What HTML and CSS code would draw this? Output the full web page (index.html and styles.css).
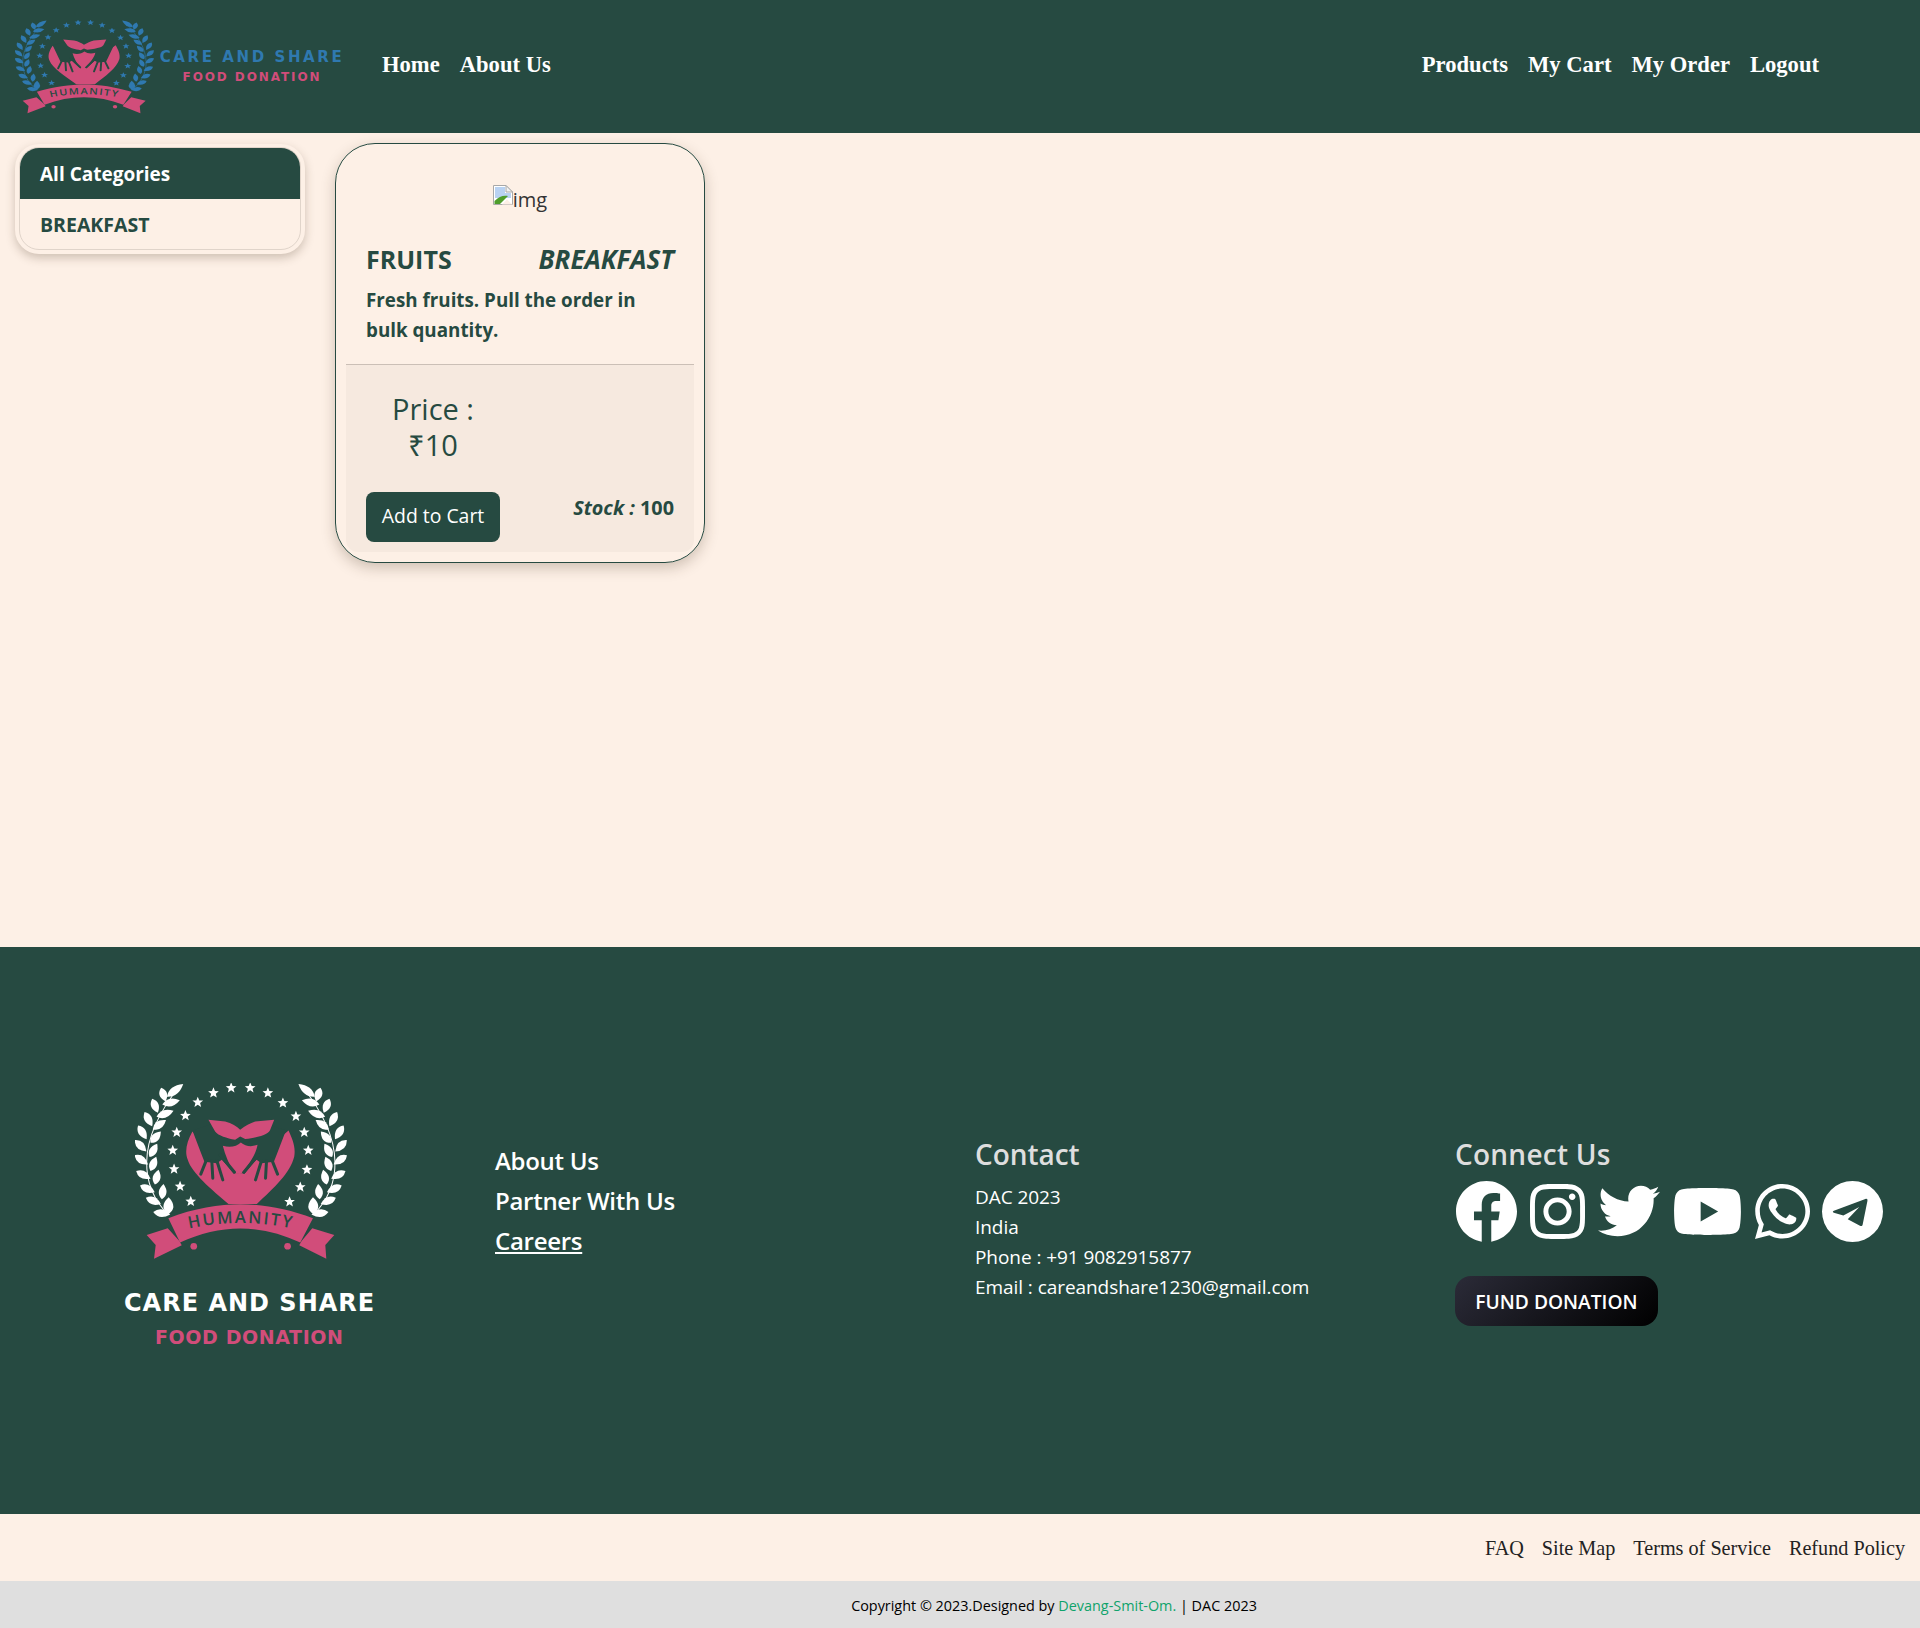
FILE: index.html
```html
<!DOCTYPE html>
<html lang="en">
<head>
<meta charset="utf-8">
<title>Care and Share</title>
<link rel="stylesheet" href="styles.css">
</head>
<body>
<svg class="defs" width="0" height="0" aria-hidden="true">
  <defs>
    <path id="leaf" d="M-27 0Q-4 -23 27 0Q-4 23 -27 0Z"/>
    <polygon id="star" points="0,-17 4.5,-6 16,-5.5 7,2 10,13.5 0,7 -10,13.5 -7,2 -16,-5.5 -4.5,-6"/>
    <g id="hand" class="dark">
      <path d="M52 62L78 130L88 156L125 160L140 150L178 190L190 190L175 110L120 40Z"/>
      <path class="finger" d="M95 148L77 193M110 152L113 205M125 152L143 210M135 135L178 187"/>
    </g>
    <g id="branch">
      <path d="M205 465C125 385 100 250 240 78" fill="none" stroke="currentColor" stroke-width="3"/>
      <use href="#leaf" transform="translate(225 92) rotate(-38) scale(1.15 1)"/>
      <use href="#leaf" transform="translate(190 105) rotate(72) scale(.8 1)"/>
      <use href="#leaf" transform="translate(165 138) rotate(68) scale(.85 1)"/>
      <use href="#leaf" transform="translate(145 178) rotate(62) scale(.9 1)"/>
      <use href="#leaf" transform="translate(127 218) rotate(58) scale(.9 1)"/>
      <use href="#leaf" transform="translate(122 258) rotate(45) scale(.9 1)"/>
      <use href="#leaf" transform="translate(124 300) rotate(35) scale(.9 1)"/>
      <use href="#leaf" transform="translate(130 345) rotate(28) scale(.9 1)"/>
      <use href="#leaf" transform="translate(142 387) rotate(25) scale(.9 1)"/>
      <use href="#leaf" transform="translate(160 423) rotate(22) scale(.9 1)"/>
      <use href="#leaf" transform="translate(213 128) rotate(-14)"/>
      <use href="#leaf" transform="translate(195 162) rotate(-20)"/>
      <use href="#leaf" transform="translate(178 195) rotate(-35) scale(.9 1)"/>
      <use href="#leaf" transform="translate(167 232) rotate(-48) scale(.85 1)"/>
      <use href="#leaf" transform="translate(160 272) rotate(-60) scale(.85 1)"/>
      <use href="#leaf" transform="translate(160 312) rotate(-68) scale(.85 1)"/>
      <use href="#leaf" transform="translate(170 352) rotate(-76) scale(.85 1)"/>
      <use href="#leaf" transform="translate(188 395) rotate(-84) scale(.85 1)"/>
      <use href="#leaf" transform="translate(205 438) rotate(-88) scale(.95 1.3)"/>
      <use href="#leaf" transform="translate(185 460) rotate(8) scale(.95 1)"/>
    </g>
    <g id="emblem">
      <use href="#branch"/>
      <use href="#branch" transform="translate(844 0) scale(-1 1)"/>
      <use href="#star" transform="translate(272 425)"/>
      <use href="#star" transform="translate(240 380)"/>
      <use href="#star" transform="translate(222 328)"/>
      <use href="#star" transform="translate(218 272)"/>
      <use href="#star" transform="translate(230 218)"/>
      <use href="#star" transform="translate(256 168)"/>
      <use href="#star" transform="translate(293 128)"/>
      <use href="#star" transform="translate(340 100)"/>
      <use href="#star" transform="translate(393 85)"/>
      <use href="#star" transform="translate(450 85)"/>
      <use href="#star" transform="translate(503 100)"/>
      <use href="#star" transform="translate(548 130)"/>
      <use href="#star" transform="translate(587 170)"/>
      <use href="#star" transform="translate(612 218)"/>
      <use href="#star" transform="translate(624 272)"/>
      <use href="#star" transform="translate(620 330)"/>
      <use href="#star" transform="translate(600 382)"/>
      <use href="#star" transform="translate(568 426)"/>
      <g transform="translate(225 150)">
        <path class="pink" d="M52 65C35 95 28 125 38 150C50 190 110 240 160 282H245C295 235 345 190 357 140C362 110 350 85 340 62L190 190Z"/>
        <use href="#hand"/>
        <use href="#hand" transform="translate(384 0) scale(-1 1)"/>
        <path class="pink" d="M143 108C165 115 185 110 197 98C210 110 230 112 247 105C243 130 225 160 198 192H178C162 165 150 135 143 108Z"/>
        <path class="finger dark" d="M135 135L178 187M249 135L206 187"/>
        <path class="pink" d="M100 30L150 35C170 40 185 50 195 60C210 48 225 40 240 35L297 30L285 60C280 72 265 80 210 88L195 80L180 90C155 85 130 78 120 65Z"/>
      </g>
      <g class="pink">
        <path d="M205 475C280 445 360 433 420 433C490 433 565 447 638 475L600 548C540 520 480 506 420 506C360 506 300 520 240 548Z"/>
        <path d="M203 505L140 525L167 555L162 596L245 556L238 543Z"/>
        <path d="M636 505L702 525L675 555L678 596L597 556L604 543Z"/>
        <circle cx="281" cy="559" r="10"/>
        <circle cx="562" cy="559" r="10"/>
      </g>
      <path id="humanity-arc" d="M250 510Q420 468 595 510" fill="none"/>
      <text class="humanity"><textPath href="#humanity-arc" startOffset="50%">HUMANITY</textPath></text>
    </g>
  </defs>
</svg>

<header class="topbar">
  <div class="brand">
    <svg class="brand-emblem" viewBox="105 70 635 530" preserveAspectRatio="none" aria-hidden="true"><use href="#emblem"/></svg>
    <div class="brand-text">
      <div class="brand-name">CARE AND SHARE</div>
      <div class="brand-sub">FOOD DONATION</div>
    </div>
  </div>
  <nav class="nav nav-left">
    <a href="#">Home</a>
    <a href="#">About Us</a>
  </nav>
  <nav class="nav nav-right">
    <a href="#">Products</a>
    <a href="#">My Cart</a>
    <a href="#">My Order</a>
    <a href="#">Logout</a>
  </nav>
</header>

<main class="content">
  <aside class="sidebar">
    <div class="cat-list">
      <div class="cat-head">All Categories</div>
      <div class="cat-item">BREAKFAST</div>
    </div>
  </aside>
  <article class="card">
    <div class="card-img">
      <svg class="broken" viewBox="0 0 20 20" aria-hidden="true">
        <path d="M.5 .5H13L19.5 7V19.5H.5Z" fill="#fff" stroke="#a8a8a8"/>
        <path d="M13 .5V7H19.5Z" fill="#f2f2f2" stroke="#a8a8a8"/>
        <path d="M2 2H12V8H18V13H2Z" fill="#b9d2f2"/>
        <path d="M1.5 19V16C6 11 11 10 15 11L7 19Z" fill="#4f9e2c"/>
        <path d="M9 19.5L14 14.5L19.5 19.5Z" fill="#fdf0e6"/>
      </svg><span class="img-alt">img</span>
    </div>
    <div class="card-body">
      <div class="card-title">
        <span>FRUITS</span>
        <em>BREAKFAST</em>
      </div>
      <p class="card-desc">Fresh fruits. Pull the order in bulk quantity.</p>
    </div>
    <div class="card-foot">
      <div class="buy">
        <div class="price">Price :<br>₹10</div>
        <button class="cart-btn" type="button">Add to Cart</button>
      </div>
      <div class="stock"><em>Stock :</em> 100</div>
    </div>
  </article>
</main>

<footer class="site-foot">
  <div class="foot-col foot-logo">
    <svg class="foot-emblem" viewBox="105 70 635 530" aria-hidden="true"><use href="#emblem"/></svg>
    <div class="foot-name">CARE AND SHARE</div>
    <div class="foot-sub">FOOD DONATION</div>
  </div>
  <div class="foot-col foot-links">
    <a href="#">About Us</a>
    <a href="#">Partner With Us</a>
    <a href="#" class="under">Careers</a>
  </div>
  <div class="foot-col foot-contact">
    <h4>Contact</h4>
    <div>DAC 2023</div>
    <div>India</div>
    <div>Phone : +91 9082915877</div>
    <div>Email : careandshare1230@gmail.com</div>
  </div>
  <div class="foot-col foot-connect">
    <h4>Connect Us</h4>
    <div class="socials">
      <svg class="s-fb" viewBox="8 8 496 496" aria-hidden="true"><path d="M504 256C504 119 393 8 256 8S8 119 8 256c0 123.78 90.69 226.38 209.25 245V327.69h-63V256h63v-54.64c0-62.15 37-96.48 93.67-96.48 27.14 0 55.52 4.84 55.52 4.84v61h-31.28c-30.8 0-40.41 19.12-40.41 38.73V256h68.78l-11 71.69h-57.78V501C413.31 482.38 504 379.78 504 256z"/></svg>
      <svg class="s-ig" viewBox="0 32 448 448" aria-hidden="true"><path d="M224.1 141c-63.6 0-114.9 51.3-114.9 114.9s51.3 114.9 114.9 114.9S339 319.5 339 255.9 287.7 141 224.1 141zm0 189.6c-41.1 0-74.7-33.5-74.7-74.7s33.5-74.7 74.7-74.7 74.7 33.5 74.7 74.7-33.6 74.7-74.7 74.7zm146.4-194.3c0 14.9-12 26.8-26.8 26.8-14.9 0-26.8-12-26.8-26.8s12-26.8 26.8-26.8 26.8 12 26.8 26.8zm76.1 27.2c-1.7-35.9-9.9-67.7-36.2-93.9-26.2-26.2-58-34.4-93.9-36.2-37-2.1-147.9-2.1-184.9 0-35.8 1.7-67.6 9.9-93.9 36.1s-34.4 58-36.2 93.9c-2.1 37-2.1 147.9 0 184.9 1.7 35.9 9.9 67.7 36.2 93.9s58 34.4 93.9 36.2c37 2.1 147.9 2.1 184.9 0 35.9-1.7 67.7-9.9 93.9-36.2 26.2-26.2 34.4-58 36.2-93.9 2.1-37 2.1-147.8 0-184.8zM398.8 388c-7.8 19.6-22.9 34.7-42.6 42.6-29.5 11.7-99.5 9-132.1 9s-102.7 2.6-132.1-9c-19.6-7.8-34.7-22.9-42.6-42.6-11.7-29.5-9-99.5-9-132.1s-2.6-102.7 9-132.1c7.8-19.6 22.9-34.7 42.6-42.6 29.5-11.7 99.5-9 132.1-9s102.7-2.6 132.1 9c19.6 7.8 34.7 22.9 42.6 42.6 11.7 29.5 9 99.5 9 132.1s2.7 102.7-9 132.1z"/></svg>
      <svg class="s-tw" viewBox="0 0 512 512" aria-hidden="true"><path d="M459.37 151.716c.325 4.548.325 9.097.325 13.645 0 138.72-105.583 298.558-298.558 298.558-59.452 0-114.68-17.219-161.137-47.106 8.447.974 16.568 1.299 25.34 1.299 49.055 0 94.213-16.568 130.274-44.832-46.132-.975-84.792-31.188-98.112-72.772 6.498.974 12.995 1.624 19.818 1.624 9.421 0 18.843-1.3 27.614-3.573-48.081-9.747-84.143-51.98-84.143-102.985v-1.299c13.969 7.797 30.214 12.67 47.431 13.319-28.264-18.843-46.781-51.005-46.781-87.391 0-19.492 5.197-37.36 14.294-52.954 51.655 63.675 129.3 105.258 216.365 109.807-1.624-7.797-2.599-15.918-2.599-24.04 0-57.828 46.782-104.934 104.934-104.934 30.213 0 57.502 12.67 76.67 33.137 23.715-4.548 46.456-13.32 66.599-25.34-7.798 24.366-24.366 44.833-46.132 57.827 21.117-2.273 41.584-8.122 60.426-16.243-14.292 20.791-32.161 39.308-52.628 54.253z"/></svg>
      <svg class="s-yt" viewBox="15 64 546 384" aria-hidden="true"><path d="M549.655 124.083c-6.281-23.65-24.787-42.276-48.284-48.597C458.781 64 288 64 288 64S117.22 64 74.629 75.486c-23.497 6.322-42.003 24.947-48.284 48.597-11.412 42.867-11.412 132.305-11.412 132.305s0 89.438 11.412 132.305c6.281 23.65 24.787 41.5 48.284 47.821C117.22 448 288 448 288 448s170.78 0 213.371-11.486c23.497-6.321 42.003-24.171 48.284-47.821 11.412-42.867 11.412-132.305 11.412-132.305s0-89.438-11.412-132.305zm-317.51 213.508V175.185l142.739 81.205-142.739 81.201z"/></svg>
      <svg class="s-wa" viewBox="0 32 448 448" aria-hidden="true"><path d="M380.9 97.1C339 55.1 283.2 32 223.9 32c-122.4 0-222 99.6-222 222 0 39.1 10.2 77.3 29.6 111L0 480l117.7-30.9c32.4 17.7 68.9 27 106.1 27h.1c122.3 0 224.1-99.6 224.1-222 0-59.3-25.2-115-67.1-157zm-157 341.6c-33.2 0-65.7-8.9-94-25.7l-6.7-4-69.8 18.3L72 359.2l-4.4-7c-18.5-29.4-28.2-63.3-28.2-98.2 0-101.7 82.8-184.5 184.6-184.5 49.3 0 95.6 19.2 130.4 54.1 34.8 34.9 56.2 81.2 56.1 130.5 0 101.8-84.9 184.6-186.6 184.6zm101.2-138.2c-5.5-2.8-32.8-16.2-37.9-18-5.1-1.9-8.8-2.8-12.5 2.8-3.7 5.6-14.3 18-17.6 21.8-3.2 3.7-6.5 4.2-12 1.4-32.6-16.3-54-29.1-75.5-66-5.7-9.8 5.7-9.1 16.3-30.3 1.8-3.7.9-6.9-.5-9.7-1.4-2.8-12.5-30.1-17.1-41.2-4.5-10.8-9.1-9.3-12.5-9.5-3.2-.2-6.9-.2-10.6-.2-3.7 0-9.7 1.4-14.8 6.9-5.1 5.6-19.4 19-19.4 46.3 0 27.3 19.9 53.7 22.6 57.4 2.8 3.7 39.1 59.7 94.8 83.8 35.2 15.2 49 16.5 66.6 13.9 10.7-1.6 32.8-13.4 37.4-26.4 4.6-13 4.6-24.1 3.2-26.4-1.3-2.5-5-3.9-10.5-6.6z"/></svg>
      <svg class="s-tg" viewBox="0 0 180 180" aria-hidden="true"><path fill-rule="evenodd" d="M90 0A90 90 0 1 0 90 180A90 90 0 1 0 90 0ZM35 88L128 53C133 51 135 54 134 59L120 128C119 133 116 134 112 132L76 113L110 77L63 102L35 94C31 92 31 90 35 88Z"/></svg>
    </div>
    <button class="fund-btn" type="button">FUND DONATION</button>
  </div>
</footer>

<div class="legal">
  <a href="#">FAQ</a>
  <a href="#">Site Map</a>
  <a href="#">Terms of Service</a>
  <a href="#">Refund Policy</a>
</div>
<div class="copyright">Copyright © 2023.Designed by <a href="#">Devang-Smit-Om.</a> | DAC 2023</div>
</body>
</html>
```

FILE: styles.css
```css
* { box-sizing: border-box; }
html, body { margin: 0; padding: 0; }
body {
  width: 1920px;
  background: #fdf0e6;
  color: #264a41;
  font-family: "Open Sans", "Noto Sans", sans-serif;
}
a { color: inherit; text-decoration: none; }
.defs { position: absolute; }
.pink { fill: #d14d7a; }
.dark { fill: #264a41; }
.finger { fill: none; stroke: #264a41; stroke-width: 9; stroke-linecap: round; }
.humanity {
  fill: #264a41;
  font-family: "Open Sans", sans-serif;
  font-weight: 600;
  font-size: 50px;
  letter-spacing: 6px;
  text-anchor: middle;
}

.topbar {
  height: 133px;
  background: #264a41;
  display: flex;
  align-items: center;
  padding-left: 15px;
  padding-right: 101px;
}
.brand { display: flex; align-items: center; width: 367px; height: 133px; }
.brand-emblem {
  width: 139px;
  height: 94px;
  color: #2f79b0;
  fill: currentColor;
  flex: none;
}
.brand-text { width: 186px; margin-left: 5px; text-align: center; }
.brand-name {
  font-family: "DejaVu Sans", sans-serif;
  font-weight: 700;
  font-size: 15px;
  line-height: 20px;
  letter-spacing: 2.6px;
  color: #2f79b0;
  white-space: nowrap;
}
.brand-sub {
  font-family: "DejaVu Sans", sans-serif;
  font-weight: 700;
  font-size: 12px;
  line-height: 20px;
  letter-spacing: 1.9px;
  color: #d14d7a;
  white-space: nowrap;
}
.nav {
  display: flex;
  gap: 20px;
  padding-bottom: 3px;
  font-family: "Liberation Serif", serif;
  font-weight: 700;
  font-size: 22.6px;
  color: #fff;
}
.nav-right { margin-left: auto; }

.content {
  height: 814px;
  display: flex;
  align-items: flex-start;
  padding: 10px 0 0 15px;
  gap: 30px;
}
.sidebar {
  width: 290px;
  margin-top: 1px;
  padding: 3px 4px 4px;
  border-radius: 24px;
  background: #fdf0e6;
  box-shadow: 0 4px 10px rgba(70, 50, 30, .25);
}
.cat-list {
  border: 1px solid #e0d4ca;
  border-radius: 20px;
  overflow: hidden;
}
.cat-head {
  margin: -1px -1px 0;
  height: 52px;
  background: #264a41;
  color: #fff;
  padding: 1px 0 0 21px;
  display: flex;
  align-items: center;
  font-size: 19px;
  font-weight: 700;
}
.cat-item {
  height: 50px;
  padding-left: 20px;
  display: flex;
  align-items: center;
  font-size: 19.5px;
  font-weight: 700;
}

.card {
  width: 370px;
  height: 420px;
  border: 1px solid #264a41;
  border-radius: 40px;
  padding: 0 10px 10px;
  box-shadow: 0 5px 14px rgba(70, 50, 30, .25);
  display: flex;
  flex-direction: column;
}
.card-img {
  height: 92px;
  padding-top: 41px;
  display: flex;
  justify-content: center;
  align-items: flex-start;
  color: #333;
  font-size: 20px;
  line-height: 30px;
}
.broken { width: 20px; height: 20px; flex: none; }
.card-body { padding: 0 20px; height: 128px; }
.card-title {
  display: flex;
  justify-content: space-between;
  font-size: 25px;
  font-weight: 700;
  line-height: 32px;
  padding-top: 7px;
}
.card-title em { font-style: italic; font-size: 25.9px; }
.card-desc {
  width: 280px;
  margin: 10px 0 0;
  font-size: 18.8px;
  font-weight: 700;
  line-height: 30px;
}
.card-foot {
  flex: 1;
  background: #f6e9df;
  border-top: 1px solid #cbbfb6;
  border-radius: 0 0 12px 12px;
  padding: 0 20px;
  display: flex;
  justify-content: space-between;
}
.buy { width: 134px; text-align: center; padding-top: 26px; }
.price { font-size: 29px; line-height: 36px; margin-bottom: 29px; }
.cart-btn {
  width: 134px;
  height: 50px;
  border: 0;
  border-radius: 8px;
  padding: 0 0 3px;
  background: #264a41;
  color: #fff;
  font-family: inherit;
  font-size: 19.4px;
}
.stock {
  margin-top: 130px;
  font-size: 19.8px;
  font-weight: 700;
  line-height: 26px;
}

.site-foot {
  height: 567px;
  background: #264a41;
  display: grid;
  grid-template-columns: repeat(4, 480px);
  color: #fff;
}
.foot-col { padding-left: 15px; }
.foot-logo {
  padding: 136px 0 0 135px;
  display: flex;
  flex-direction: column;
  align-items: flex-start;
}
.foot-emblem { width: 212px; height: 177px; color: #fff; fill: currentColor; }
.foot-name, .foot-sub { font-family: "DejaVu Sans", sans-serif; font-weight: 700; white-space: nowrap; }
.foot-name { font-size: 24px; line-height: 30px; margin: 28px 0 0 -11px; letter-spacing: 1px; }
.foot-sub { font-size: 19px; line-height: 26px; margin: 6px 0 0 20px; letter-spacing: .6px; color: #d14d7a; }
.foot-links {
  padding-top: 194px;
  display: flex;
  flex-direction: column;
  align-items: flex-start;
  font-size: 24px;
  font-weight: 600;
  line-height: 40px;
  letter-spacing: -.28px;
}
.under { text-decoration: underline; }
h4 {
  margin: 0;
  font-size: 28px;
  font-weight: 600;
  line-height: 36px;
  color: #dedede;
}
.foot-contact { padding-top: 189px; font-size: 19px; line-height: 30px; letter-spacing: -.06px; }
.foot-contact h4 { margin-bottom: 10px; }
.foot-connect { padding-top: 189px; }
.foot-connect h4 { letter-spacing: .25px; }
.socials {
  display: flex;
  align-items: center;
  height: 62px;
  margin-top: 8px;
  padding-left: 1px;
  fill: #fff;
}
.socials svg { display: block; flex: none; }
.s-fb { width: 61px; height: 61px; }
.s-ig { width: 55px; height: 55px; margin-left: 13px; }
.s-tw { width: 62px; height: 62px; margin-left: 13px; }
.s-yt { width: 67px; height: 47px; margin-left: 14px; }
.s-wa { width: 55px; height: 55px; margin-left: 14px; }
.s-tg { width: 61px; height: 61px; margin-left: 12px; }
.fund-btn {
  display: block;
  margin-top: 34px;
  width: 203px;
  height: 50px;
  border: 0;
  border-radius: 16px;
  background: linear-gradient(135deg, #2b2b38, #000);
  color: #fff;
  font-family: inherit;
  font-size: 19.2px;
  font-weight: 600;
}

.legal {
  height: 67px;
  display: flex;
  justify-content: flex-end;
  align-items: center;
  gap: 18px;
  padding: 2px 15px 0 0;
  font-family: "Liberation Serif", serif;
  font-size: 20.2px;
  color: #222;
}
.copyright {
  height: 47px;
  background: #dfdfdf;
  color: #000;
  display: flex;
  justify-content: center;
  align-items: center;
  white-space: pre;
  padding: 1px 0 0 188px;
  font-size: 14.4px;
}
.copyright a { color: #0fa36b; }
```
